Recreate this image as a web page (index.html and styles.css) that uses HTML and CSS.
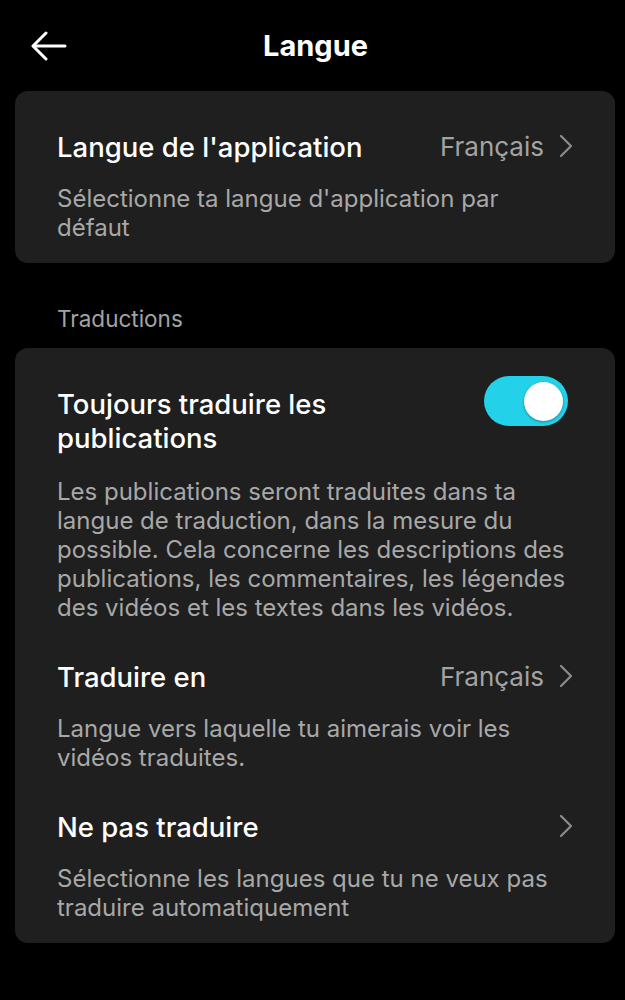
FILE: index.html
```html
<!DOCTYPE html>
<html lang="fr">
<head>
    <meta charset="UTF-8">
    <meta name="viewport" content="width=device-width, initial-scale=1.0">
    <title>Langue</title>
    <link rel="stylesheet" href="styles.css">
</head>
<body>

<div class="page">
    <!-- En-tête -->
    <div class="header">
        <button class="back" aria-label="Retour">
            <svg width="36" height="30" viewBox="0 0 36 30" fill="none" stroke="#fff" stroke-width="3" stroke-linecap="round" stroke-linejoin="round">
                <path d="M34 15H3"/>
                <path d="M15 2L2 15l13 13"/>
            </svg>
        </button>
        <h1>Langue</h1>
    </div>

    <div class="card">
        <div class="item">
            <div class="row">
                <span class="title">Langue de l'application</span>
                <span class="value">Français
                    <svg class="chevron" width="14" height="24" viewBox="0 0 14 24" fill="none" stroke="#8c8c8c" stroke-width="2.2" stroke-linecap="round" stroke-linejoin="round"><path d="M2 2l10 10-10 10"/></svg>
                </span>
            </div>
            <p class="desc">Sélectionne ta langue d'application par défaut</p>
        </div>
    </div>

    <div class="section-label">Traductions</div>

    <div class="card">
        <div class="item">
            <div class="row">
                <span class="title wrap">Toujours traduire les publications</span>
                <span class="toggle on"><span class="knob"></span></span>
            </div>
            <p class="desc desc-long">Les publications seront traduites dans ta langue de traduction, dans la mesure du possible. Cela concerne les descriptions des publications, les commentaires, les légendes des vidéos et les textes dans les vidéos.</p>
        </div>
        <div class="item">
            <div class="row">
                <span class="title">Traduire en</span>
                <span class="value">Français
                    <svg class="chevron" width="14" height="24" viewBox="0 0 14 24" fill="none" stroke="#8c8c8c" stroke-width="2.2" stroke-linecap="round" stroke-linejoin="round"><path d="M2 2l10 10-10 10"/></svg>
                </span>
            </div>
            <p class="desc">Langue vers laquelle tu aimerais voir les vidéos traduites.</p>
        </div>
        <div class="item">
            <div class="row">
                <span class="title">Ne pas traduire</span>
                <span class="value">
                    <svg class="chevron" width="14" height="24" viewBox="0 0 14 24" fill="none" stroke="#8c8c8c" stroke-width="2.2" stroke-linecap="round" stroke-linejoin="round"><path d="M2 2l10 10-10 10"/></svg>
                </span>
            </div>
            <p class="desc">Sélectionne les langues que tu ne veux pas traduire automatiquement</p>
        </div>
    </div>
</div>

</body>
</html>
```

FILE: styles.css
```css
body {
    font-family: Inter, Roboto, "Liberation Sans", Arial, sans-serif;
    background-color: #000;
    color: #fff;
    margin: 0;
    padding: 0;
}
.page {
    padding: 0 10px 0 15px;
}
.header {
    position: relative;
    height: 91px;
    display: flex;
    align-items: center;
    justify-content: center;
}
.back {
    position: absolute;
    left: 16px;
    top: 31px;
    background: none;
    border: none;
    padding: 0;
    display: flex;
}
h1 {
    margin: 0;
    font-size: 29px;
    font-weight: 700;
    line-height: 36px;
    margin-left: 1px;
}
.card {
    background-color: #1f1f1f;
    border-radius: 13px;
    padding: 39px 42px 21px 42px;
}
.item + .item {
    margin-top: 38px;
}
.row {
    display: flex;
    justify-content: space-between;
    align-items: flex-start;
}
.title {
    font-size: 27.5px;
    font-weight: 500;
    line-height: 34px;
}
.title.wrap {
    max-width: 300px;
}
.value {
    display: flex;
    align-items: center;
    height: 34px;
    font-size: 26px;
    line-height: 34px;
    color: #a3a3a3;
}
.chevron {
    margin-left: 15px;
    margin-top: -3px;
}
.desc {
    margin: 20px 0 0;
    font-size: 24px;
    line-height: 29px;
    color: #a8a8a8;
}
.desc-long {
    margin-top: 22px;
}
.section-label {
    font-size: 22.5px;
    line-height: 28px;
    color: #a3a3a3;
    padding: 42px 0 15px 42px;
}
.toggle {
    position: relative;
    width: 84px;
    height: 50px;
    border-radius: 25px;
    background-color: #23d2e9;
    margin-top: -11px;
    margin-right: 5px;
    flex-shrink: 0;
}
.knob {
    position: absolute;
    top: 5.5px;
    right: 5px;
    width: 39px;
    height: 39px;
    border-radius: 50%;
    background-color: #fff;
    box-shadow: 0 1px 3px rgba(0, 0, 0, 0.35);
}
```
